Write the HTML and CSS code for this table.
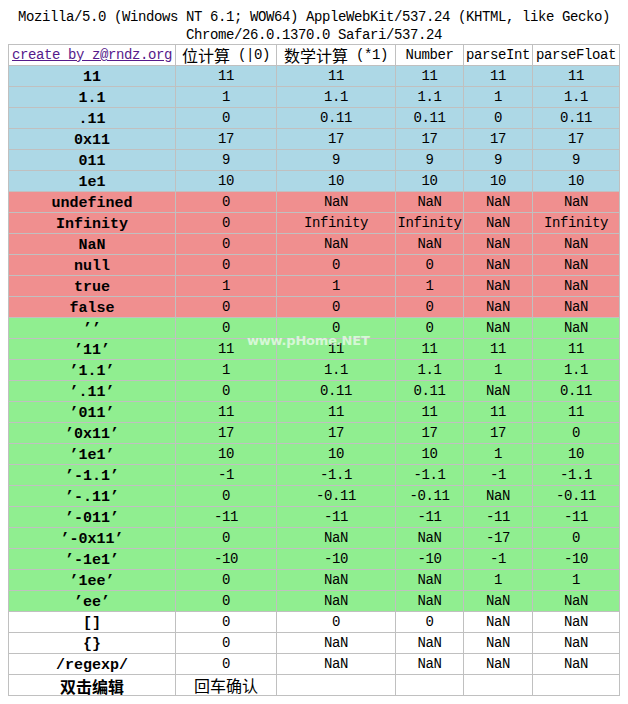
FILE: index.html
```html
<!DOCTYPE html>
<html>
<head>
<meta charset="utf-8">
<link rel="stylesheet" href="styles.css">
</head>
<body>
<div class="ua">Mozilla/5.0 (Windows NT 6.1; WOW64) AppleWebKit/537.24 (KHTML, like Gecko) Chrome/26.0.1370.0 Safari/537.24</div>
<table class="grid">
<colgroup>
<col class="c1"><col class="c2"><col class="c3"><col class="c4"><col class="c5"><col class="c6">
</colgroup>
<tr class="head">
<td><a href="#" class="link">create by z@rndz.org</a></td>
<td><span class="cn">位计算</span> (|0)</td>
<td><span class="cn">数学计算</span> (*1)</td>
<td>Number</td>
<td>parseInt</td>
<td>parseFloat</td>
</tr>
<tr class="blue"><th>11</th><td>11</td><td>11</td><td>11</td><td>11</td><td>11</td></tr>
<tr class="blue"><th>1.1</th><td>1</td><td>1.1</td><td>1.1</td><td>1</td><td>1.1</td></tr>
<tr class="blue"><th>.11</th><td>0</td><td>0.11</td><td>0.11</td><td>0</td><td>0.11</td></tr>
<tr class="blue"><th>0x11</th><td>17</td><td>17</td><td>17</td><td>17</td><td>17</td></tr>
<tr class="blue"><th>011</th><td>9</td><td>9</td><td>9</td><td>9</td><td>9</td></tr>
<tr class="blue"><th>1e1</th><td>10</td><td>10</td><td>10</td><td>10</td><td>10</td></tr>
<tr class="red"><th>undefined</th><td>0</td><td>NaN</td><td>NaN</td><td>NaN</td><td>NaN</td></tr>
<tr class="red"><th>Infinity</th><td>0</td><td>Infinity</td><td>Infinity</td><td>NaN</td><td>Infinity</td></tr>
<tr class="red"><th>NaN</th><td>0</td><td>NaN</td><td>NaN</td><td>NaN</td><td>NaN</td></tr>
<tr class="red"><th>null</th><td>0</td><td>0</td><td>0</td><td>NaN</td><td>NaN</td></tr>
<tr class="red"><th>true</th><td>1</td><td>1</td><td>1</td><td>NaN</td><td>NaN</td></tr>
<tr class="red"><th>false</th><td>0</td><td>0</td><td>0</td><td>NaN</td><td>NaN</td></tr>
<tr class="green"><th>’’</th><td>0</td><td>0</td><td>0</td><td>NaN</td><td>NaN</td></tr>
<tr class="green"><th>’11’</th><td>11</td><td>11</td><td>11</td><td>11</td><td>11</td></tr>
<tr class="green"><th>’1.1’</th><td>1</td><td>1.1</td><td>1.1</td><td>1</td><td>1.1</td></tr>
<tr class="green"><th>’.11’</th><td>0</td><td>0.11</td><td>0.11</td><td>NaN</td><td>0.11</td></tr>
<tr class="green"><th>’011’</th><td>11</td><td>11</td><td>11</td><td>11</td><td>11</td></tr>
<tr class="green"><th>’0x11’</th><td>17</td><td>17</td><td>17</td><td>17</td><td>0</td></tr>
<tr class="green"><th>’1e1’</th><td>10</td><td>10</td><td>10</td><td>1</td><td>10</td></tr>
<tr class="green"><th>’-1.1’</th><td>-1</td><td>-1.1</td><td>-1.1</td><td>-1</td><td>-1.1</td></tr>
<tr class="green"><th>’-.11’</th><td>0</td><td>-0.11</td><td>-0.11</td><td>NaN</td><td>-0.11</td></tr>
<tr class="green"><th>’-011’</th><td>-11</td><td>-11</td><td>-11</td><td>-11</td><td>-11</td></tr>
<tr class="green"><th>’-0x11’</th><td>0</td><td>NaN</td><td>NaN</td><td>-17</td><td>0</td></tr>
<tr class="green"><th>’-1e1’</th><td>-10</td><td>-10</td><td>-10</td><td>-1</td><td>-10</td></tr>
<tr class="green"><th>’1ee’</th><td>0</td><td>NaN</td><td>NaN</td><td>1</td><td>1</td></tr>
<tr class="green"><th>’ee’</th><td>0</td><td>NaN</td><td>NaN</td><td>NaN</td><td>NaN</td></tr>
<tr class="white"><th>[]</th><td>0</td><td>0</td><td>0</td><td>NaN</td><td>NaN</td></tr>
<tr class="white"><th>{}</th><td>0</td><td>NaN</td><td>NaN</td><td>NaN</td><td>NaN</td></tr>
<tr class="white"><th>/regexp/</th><td>0</td><td>NaN</td><td>NaN</td><td>NaN</td><td>NaN</td></tr>
<tr class="white"><th><span class="cn">双击编辑</span></th><td><span class="cn">回车确认</span></td><td></td><td></td><td></td><td></td></tr>
</table>
<div class="watermark">www.pHome.NET</div>
</body>
</html>
```
FILE: styles.css
```css
html, body {
  background: #ffffff;
}
body {
  margin: 8px;
  font-family: "Liberation Mono", "DejaVu Sans Mono", monospace;
  font-size: 14px;
  letter-spacing: -0.4px;
  color: #000;
  position: relative;
}
.ua {
  text-align: center;
  line-height: 18px;
  padding: 0 4px;
}
.grid {
  border-collapse: collapse;
  table-layout: fixed;
  width: 611px;
}
.c1 { width: 167px; }
.c2 { width: 101px; }
.c3 { width: 119px; }
.c4 { width: 68px; }
.c5 { width: 69px; }
.c6 { width: 87px; }
.grid tr {
  height: 21px;
}
.grid td, .grid th {
  border: 1px solid #c0c0c0;
  padding: 0;
  height: 20px;
  line-height: 20px;
  text-align: center;
  vertical-align: middle;
  white-space: nowrap;
}
.grid th {
  font-size: 15px;
  letter-spacing: 0;
  font-weight: bold;
  line-height: 16px;
  vertical-align: bottom;
}
.head td {
  background: #fff;
}
.link {
  color: #551a8b;
  text-decoration: underline;
}
.cn {
  display: inline-block;
  height: 20px;
  font-family: "Noto Sans CJK SC", sans-serif;
  font-size: 16px;
  letter-spacing: 0;
  line-height: 20px;
  vertical-align: top;
}
.grid th .cn {
  height: 18px;
  line-height: 18px;
}
.blue th, .blue td { background: #add8e6; }
.red th, .red td { background: #f08f8f; }
.green th, .green td { background: #90ee90; }
.white th, .white td { background: #fff; }
.watermark {
  position: absolute;
  left: 239px;
  top: 325px;
  font-family: "DejaVu Sans", sans-serif;
  font-weight: bold;
  font-size: 13px;
  letter-spacing: -0.2px;
  color: rgba(255, 255, 255, 0.65);
  pointer-events: none;
}
```
